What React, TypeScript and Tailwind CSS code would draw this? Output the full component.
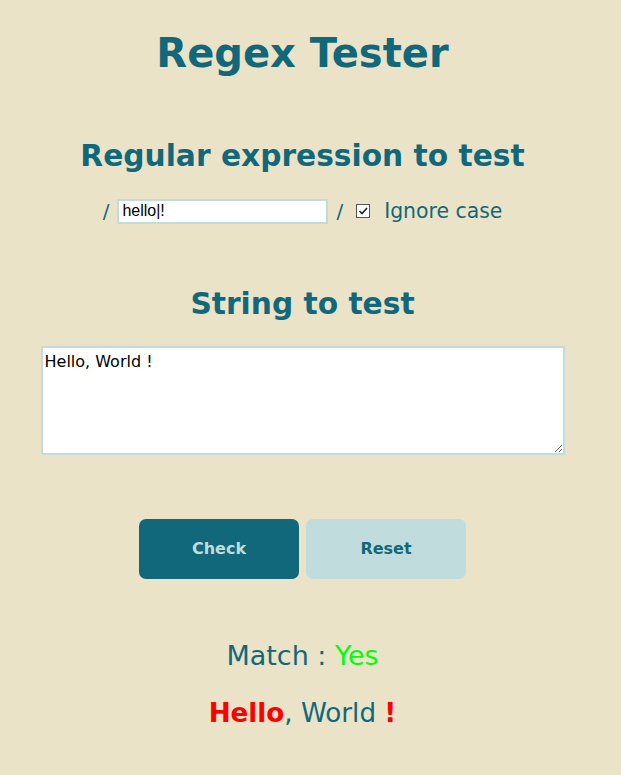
import React from "react";

export default function App() {
  return (
    <div className="min-h-[775px] w-full bg-[#ebe3c7] text-[#11687a]" style={{ fontFamily: '"DejaVu Sans", Verdana, sans-serif' }}>
      <div className="w-[605px] flex flex-col items-center">
        <h1 className="mt-[30px] text-[40px] font-bold leading-[46px]">Regex Tester</h1>
        <h2 className="mt-[62px] text-[29.7px] font-bold leading-[36px]">Regular expression to test</h2>
        <div className="mt-[24px] flex items-center text-[20px] leading-[26px]">
          <span className="mr-[8px]">/</span>
          <input
            defaultValue="hello|!"
            className="w-[211px] h-[25px] bg-white border-2 border-[#c1dcdc] px-[3px] text-[16px] text-black outline-none"
            style={{ fontFamily: '"Liberation Sans", Arial, sans-serif' }}
          />
          <span className="ml-[8px] mr-[13px]">/</span>
          <span className="w-[14px] h-[14px] border border-[#555] bg-white flex items-center justify-center mr-[14px]">
            <svg width="12" height="12" viewBox="0 0 12 12"><path d="M2.5 6 L5 8.5 L10 3" fill="none" stroke="#222" strokeWidth="1.6" /></svg>
          </span>
          <span className="text-[20.4px]">Ignore case</span>
        </div>
        <h2 className="mt-[62px] text-[29.7px] font-bold leading-[36px]">String to test</h2>
        <textarea
          defaultValue="Hello, World !"
          className="mt-[24px] w-[524px] h-[109px] bg-white border-2 border-[#c1dcdc] px-[2px] py-[2px] text-[16px] text-black outline-none"
          style={{ fontFamily: 'Tahoma, "DejaVu Sans", sans-serif' }}
        />
        <div className="mt-[64px] flex gap-[7px]">
          <button className="w-[160px] h-[60px] rounded-[7px] bg-[#11687a] text-[#c1dcdc] text-[16px] font-bold">Check</button>
          <button className="w-[160px] h-[60px] rounded-[7px] bg-[#c1dcdc] text-[#11687a] text-[16px] font-bold">Reset</button>
        </div>
        <div className="mt-[61px] text-[27px] leading-[32px]">
          Match : <span className="text-[#00ff00]">Yes</span>
        </div>
        <div className="mt-[25px] text-[26.2px] leading-[32px]">
          <span className="font-bold text-[#ff0000]">Hello</span>, World <span className="font-bold text-[#ff0000]">!</span>
        </div>
      </div>
    </div>
  );
}
